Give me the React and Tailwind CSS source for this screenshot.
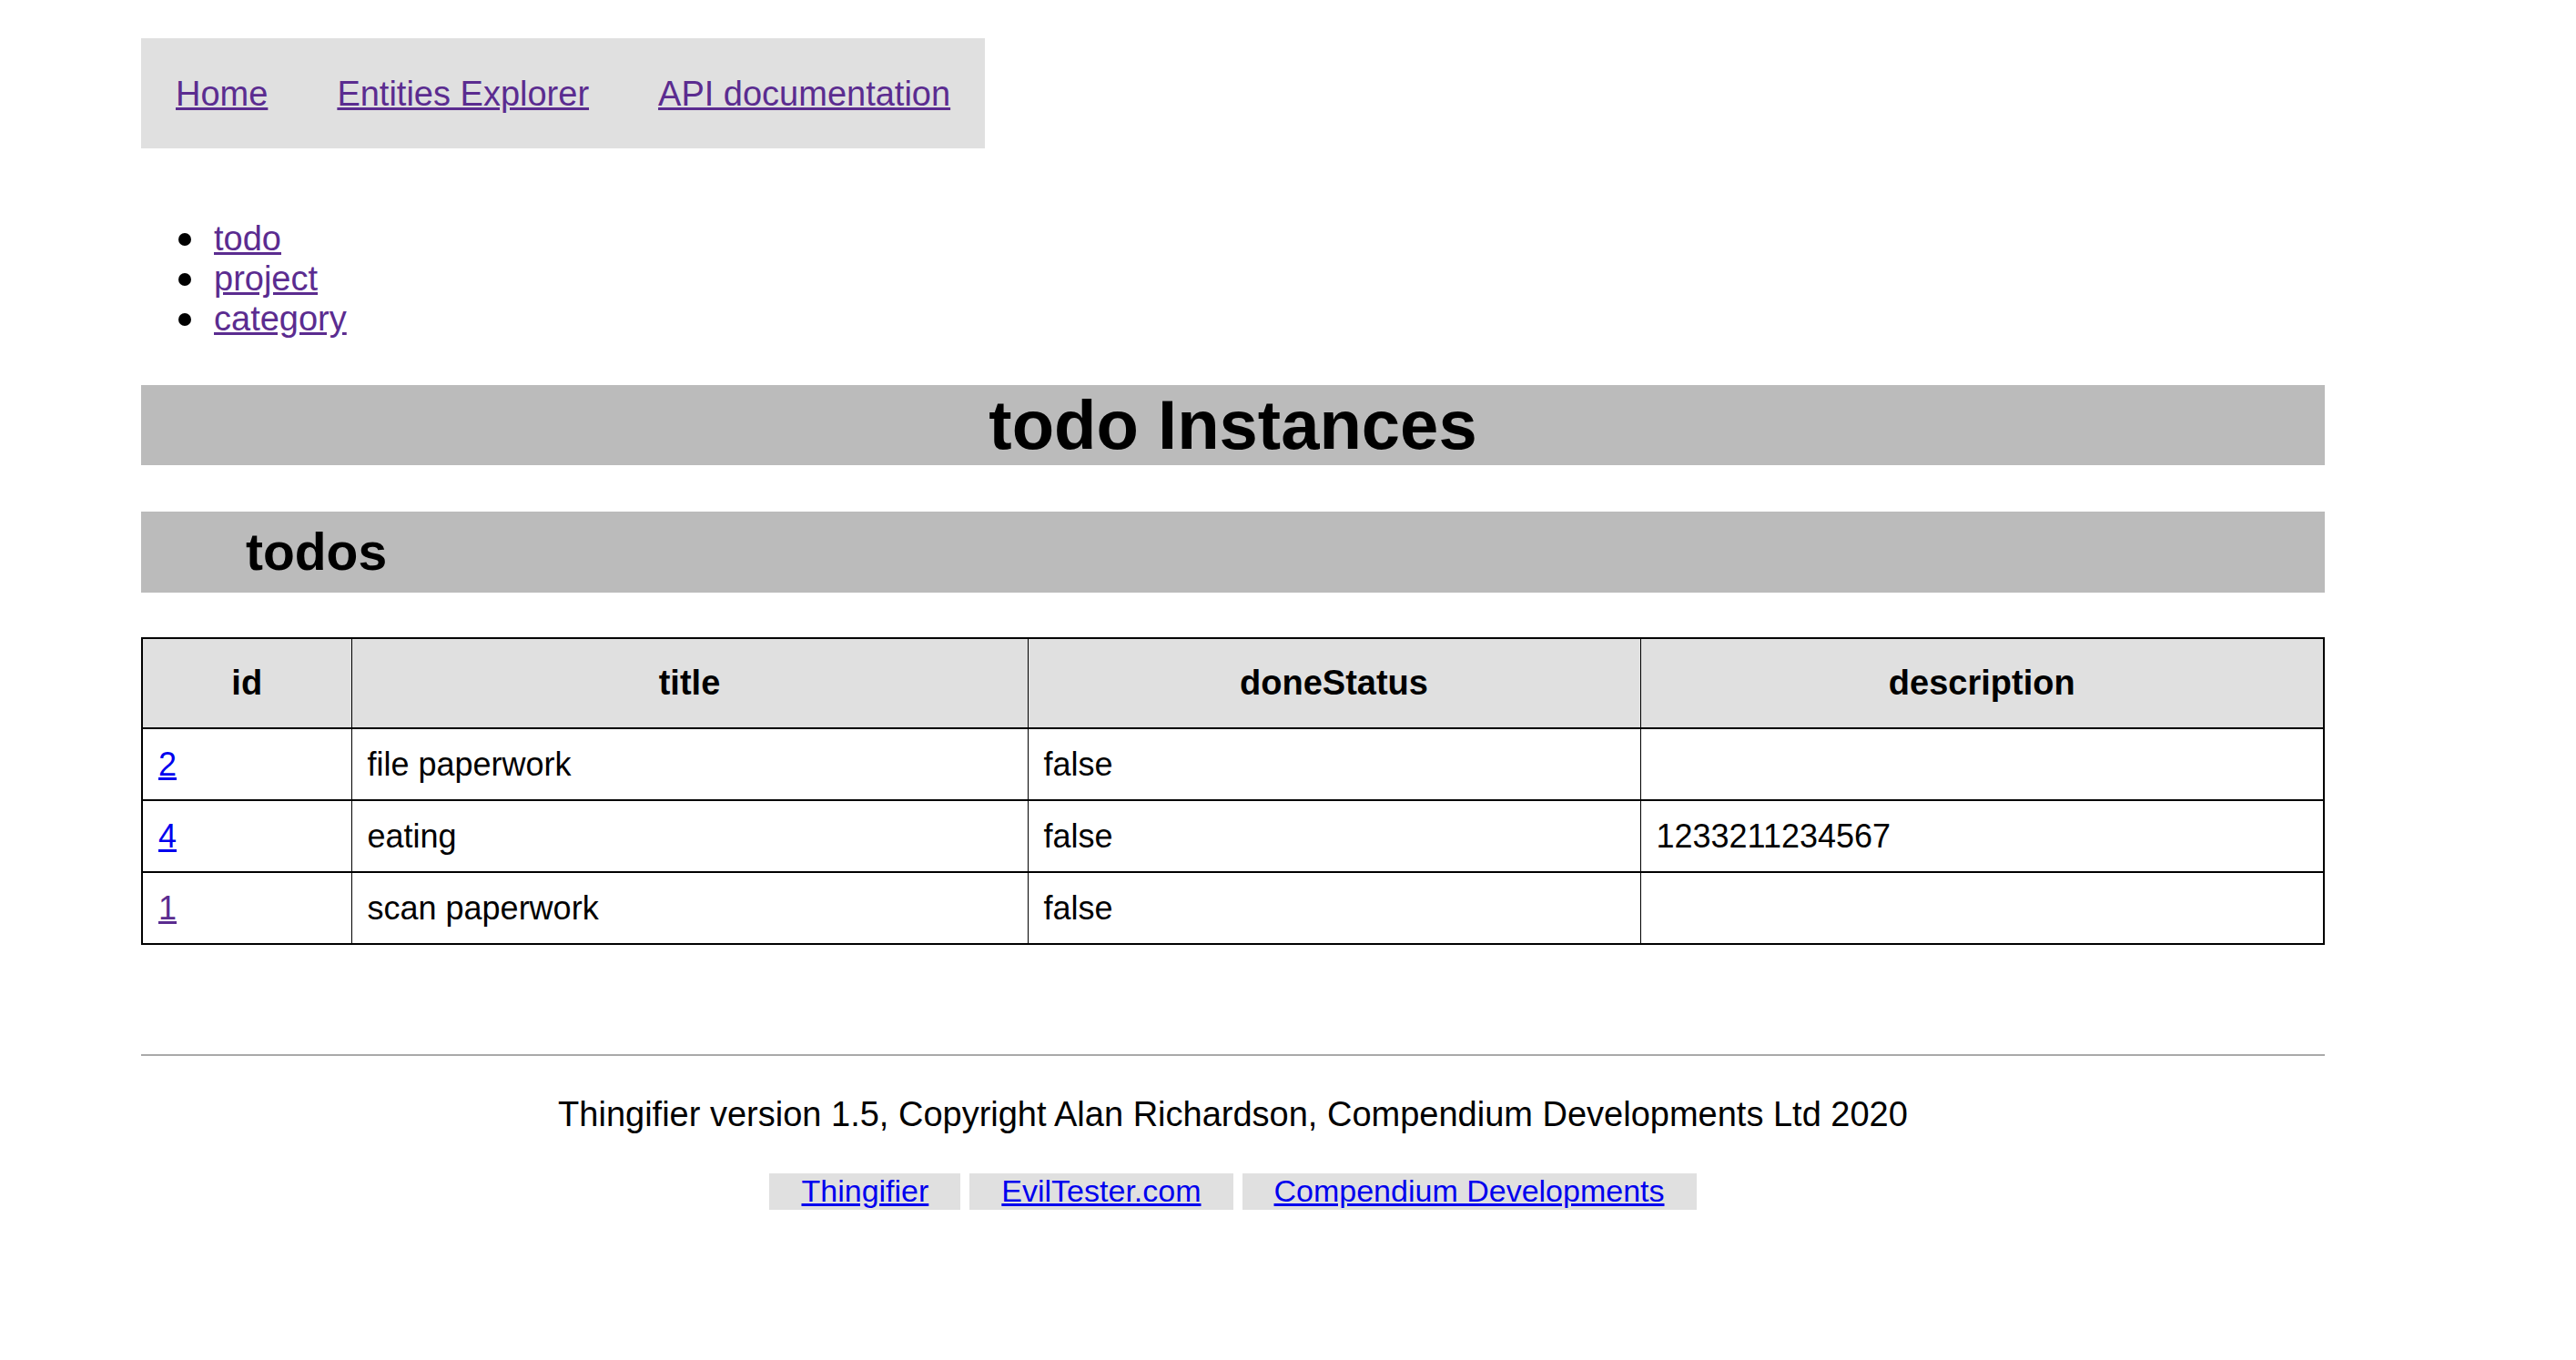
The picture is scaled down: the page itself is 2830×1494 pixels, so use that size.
const navLinks = ["Home", "Entities Explorer", "API documentation"];
const entities = ["todo", "project", "category"];

const todos = [
  { id: "2", title: "file paperwork", doneStatus: "false", description: "", visited: false },
  { id: "4", title: "eating", doneStatus: "false", description: "1233211234567", visited: false },
  { id: "1", title: "scan paperwork", doneStatus: "false", description: "", visited: true },
];

const footerLinks = ["Thingifier", "EvilTester.com", "Compendium Developments"];

const App = () => {
  return (
    <div
      className="min-h-screen bg-white text-black text-[38px] leading-[1.15]"
      style={{ fontFamily: '"Liberation Sans", Arial, Helvetica, sans-serif' }}
    >
      <div className="ml-[155px] w-[2399px] pt-[42px] pb-[160px]">
        {/* top nav */}
        <nav className="inline-flex items-center h-[121px] pt-[3px] bg-[#e0e0e0]">
          {navLinks.map((link) => (
            <a key={link} href="#" className="px-[38px] text-[#5b2c90] underline">
              {link}
            </a>
          ))}
        </nav>

        {/* entity list */}
        <ul className="mt-[78px]">
          {entities.map((e) => (
            <li key={e} className="h-[44px] flex items-center">
              <span className="ml-[41px] mr-[25px] w-[14px] h-[14px] rounded-full bg-black"></span>
              <a href="#" className="text-[#5b2c90] underline">
                {e}
              </a>
            </li>
          ))}
        </ul>

        <h1 className="mt-[50px] h-[88px] flex items-center justify-center bg-[#bbbbbb] text-[76px] font-bold">
          todo Instances
        </h1>

        <h2 className="mt-[51px] h-[89px] flex items-center pl-[115px] bg-[#bbbbbb] text-[57px] font-bold">
          todos
        </h2>

        {/* instances table */}
        <table className="mt-[49px] w-[2399px] table-fixed border-collapse border-2 border-black">
          <thead>
            <tr className="h-[99px] bg-[#e0e0e0]">
              <th className="w-[230px] border-y-2 border-x border-black font-bold text-center">id</th>
              <th className="w-[743px] border-y-2 border-x border-black font-bold text-center">title</th>
              <th className="w-[673px] border-y-2 border-x border-black font-bold text-center">doneStatus</th>
              <th className="border-y-2 border-x border-black font-bold text-center">description</th>
            </tr>
          </thead>
          <tbody className="text-[36px]">
            {todos.map((t) => (
              <tr key={t.id} className="h-[79px]">
                <td className="px-[17px] border-y-2 border-x border-black">
                  <a href="#" className={`underline ${t.visited ? "text-[#5b2c90]" : "text-[#0000ee]"}`}>
                    {t.id}
                  </a>
                </td>
                <td className="px-[17px] border-y-2 border-x border-black">{t.title}</td>
                <td className="px-[17px] border-y-2 border-x border-black">{t.doneStatus}</td>
                <td className="px-[17px] border-y-2 border-x border-black">{t.description}</td>
              </tr>
            ))}
          </tbody>
        </table>

        {/* footer */}
        <div className="mt-[120px] h-[2px] bg-[#a9a9a9]"></div>
        <p className="mt-[43px] text-center">
          Thingifier version 1.5, Copyright Alan Richardson, Compendium Developments Ltd 2020
        </p>
        <div className="mt-[42px] flex justify-center gap-[10px] text-[34px]">
          {footerLinks.map((link) => (
            <a
              key={link}
              href="#"
              className="h-[40px] flex items-center px-[35px] bg-[#e0e0e0] text-[#0000ee] underline"
            >
              {link}
            </a>
          ))}
        </div>
      </div>
    </div>
  );
};

export default App;
